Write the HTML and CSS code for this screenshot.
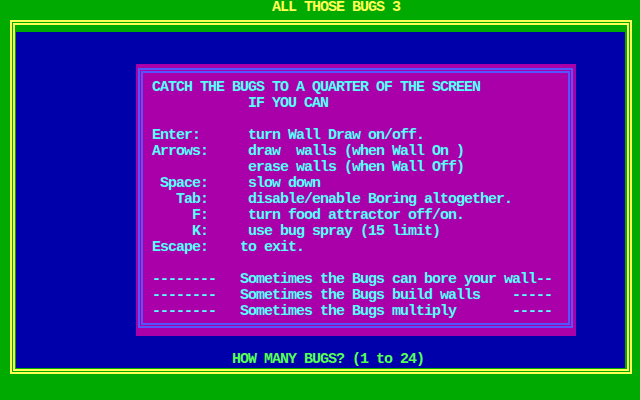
FILE: index.html
```html
<!DOCTYPE html>
<html>
<head>
<meta charset="utf-8">
<link rel="stylesheet" href="styles.css">
</head>
<body>
<div class="screen">
  <div class="title">ALL THOSE BUGS 3</div>
  <div class="frame-outer">
    <div class="frame-inner">
      <div class="field">
        <div class="box">
          <div class="line-a">
            <div class="line-b">
<pre class="help">CATCH THE BUGS TO A QUARTER OF THE SCREEN
            IF YOU CAN

Enter:      turn Wall Draw on/off.
Arrows:     draw  walls (when Wall On )
            erase walls (when Wall Off)
 Space:     slow down
   Tab:     disable/enable Boring altogether.
     F:     turn food attractor off/on.
     K:     use bug spray (15 limit)
Escape:    to exit.

--------   Sometimes the Bugs can bore your wall--
--------   Sometimes the Bugs build walls    -----
--------   Sometimes the Bugs multiply       -----</pre>
            </div>
          </div>
        </div>
        <div class="prompt">HOW MANY BUGS? (1 to 24)</div>
      </div>
    </div>
  </div>
</div>
</body>
</html>
```
FILE: styles.css
```css
html, body {
  margin: 0;
  padding: 0;
  background: #00AA00;
}
.screen {
  width: 640px;
  height: 400px;
  background: #00AA00;
  display: flex;
  flex-direction: column;
  font-family: "Liberation Mono", "DejaVu Sans Mono", monospace;
  font-size: 15px;
  letter-spacing: -1px;
  line-height: 16px;
  font-weight: bold;
  overflow: hidden;
}
.title {
  height: 16px;
  padding-left: 272px;
  color: #FFFF55;
  white-space: pre;
}
.frame-outer {
  margin: 4px 8px 0 10px;
  border: 2px solid #FFFF55;
  padding: 1px;
}
.frame-inner {
  border: 2px solid #FFFF55;
  padding: 7px 2px 1px 1px;
}
.field {
  background: #0000AA;
  height: 336px;
  padding-top: 32px;
  box-sizing: border-box;
}
.box {
  margin-left: 120px;
  width: 440px;
  height: 272px;
  background: #AA00AA;
  box-sizing: border-box;
  padding: 4px 3px 8px 2px;
}
.line-a {
  height: 100%;
  box-sizing: border-box;
  border: 2px solid #5555FF;
  padding: 1px;
}
.line-b {
  height: 100%;
  box-sizing: border-box;
  border: 2px solid #5555FF;
  padding: 7px 0 0 9px;
}
.help {
  margin: 0;
  font: inherit;
  letter-spacing: inherit;
  color: #55FFFF;
  white-space: pre;
}
.prompt {
  margin-top: 16px;
  padding-left: 216px;
  height: 16px;
  color: #55FF55;
  white-space: pre;
}
```
